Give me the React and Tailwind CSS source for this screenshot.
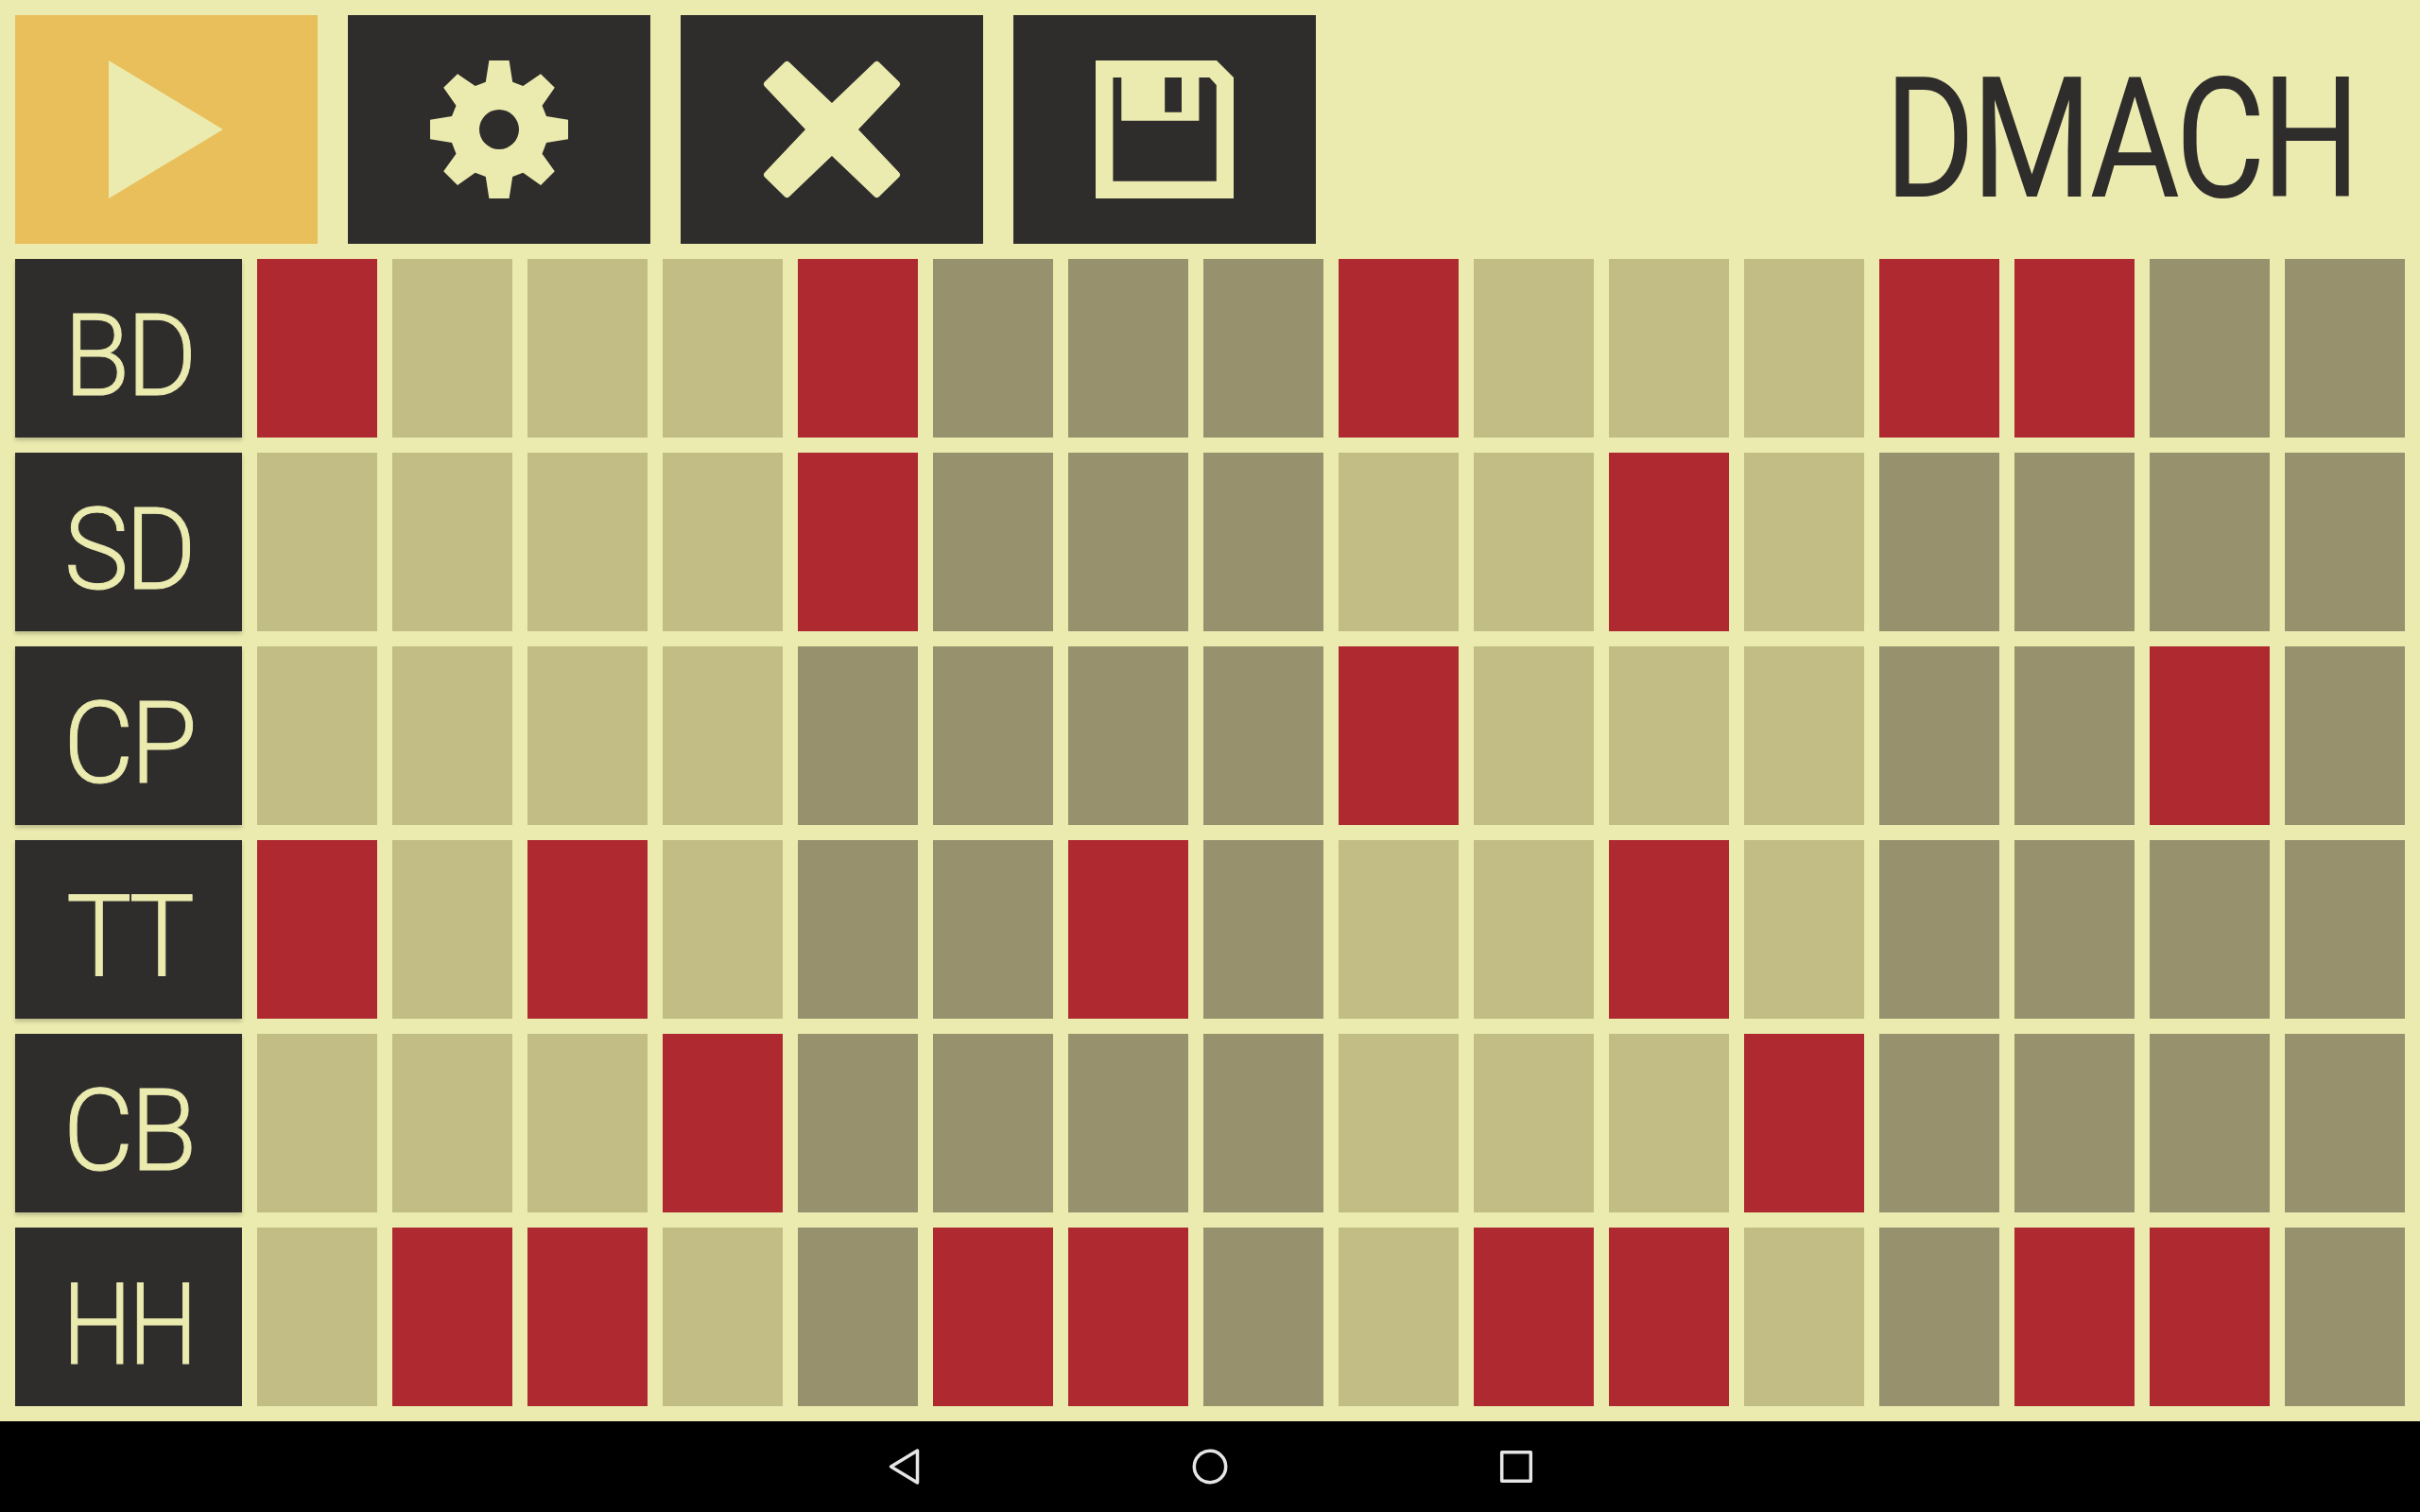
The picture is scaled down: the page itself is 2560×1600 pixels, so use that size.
import React from "react";

const tracks = [
  { name: "BD", on: [0, 4, 8, 12, 13], squeeze: "scale-x-[0.95]" },
  { name: "SD", on: [4, 10], squeeze: "scale-x-[0.96]" },
  { name: "CP", on: [8, 14], squeeze: "scale-x-[0.96]" },
  { name: "TT", on: [0, 2, 6, 10], squeeze: "scale-x-[0.97]" },
  { name: "CB", on: [3, 11], squeeze: "scale-x-[0.96]" },
  { name: "HH", on: [1, 2, 5, 6, 9, 10, 13, 14], squeeze: "scale-x-[0.86]" },
];
const steps = Array.from({ length: 16 }, (_, i) => i);

function PlayIcon() {
  return (
    <svg viewBox="0 0 146 146" className="w-[146px] h-[146px] fill-[#ebebaf]">
      <polygon points="12,0 133,73 12,146" />
    </svg>
  );
}

function GearIcon() {
  return (
    <svg viewBox="0 0 146 146" className="w-[146px] h-[146px] fill-[#ebebaf]">
      <path
        fillRule="evenodd"
        d="M62.4 0H83.6L87.2 22.7 98.3 27 117 14.3 131.8 28.7 118.5 47.7 123 59 146 62.7V83.3L123 87 118.5 98.7 131.8 117.3 117 132 98.3 118.7 87.2 123 83.6 146H62.4L58.8 123 47.7 118.7 29 132 14.2 117.3 27.5 98.7 23 87 0 83.3V62.7L23 59 27.5 47.7 14.2 28.7 29 14.3 47.7 27 58.8 22.7ZM73 52A21 21 0 1 0 73 94 21 21 0 1 0 73 52Z"
      />
    </svg>
  );
}

function CloseIcon() {
  return (
    <svg viewBox="0 0 146 146" className="w-[146px] h-[146px] fill-[#ebebaf]">
      <path d="M73 45L118.5 1.5Q120.5 0 122.5 1.5L144.5 23Q146 25 144.5 27L101 73 144.5 119Q146 121 144.5 123L122.5 144.5Q120.5 146 118.5 144.5L73 101 27.5 144.5Q25.5 146 23.5 144.5L1.5 123Q0 121 1.5 119L45 73 1.5 27Q0 25 1.5 23L23.5 1.5Q25.5 0 27.5 1.5Z" />
    </svg>
  );
}

function SaveIcon() {
  return (
    <svg viewBox="0 0 146 146" className="w-[146px] h-[146px] fill-[#ebebaf]">
      <path
        fillRule="evenodd"
        d="M0 0H128L146 18V146H0ZM18.4 18V127.7H127.8V26L120.4 18H109.4V63.7H27.3V18ZM73.2 18V54.7H91V18Z"
      />
    </svg>
  );
}

function ToolButton({ active, children }) {
  return (
    <button className={`w-80 flex items-center justify-center ${active ? "bg-[#e9bf5b]" : "bg-[#2f2d2c]"}`}>
      {children}
    </button>
  );
}

export default function App() {
  return (
    <div className="h-screen flex flex-col bg-black font-['Roboto',sans-serif]">
      <div className="flex-1 bg-[#ebebaf] p-4 flex flex-col gap-4">
        {/* Toolbar */}
        <div className="h-[242px] flex gap-8">
          <ToolButton active><PlayIcon /></ToolButton>
          <ToolButton><GearIcon /></ToolButton>
          <ToolButton><CloseIcon /></ToolButton>
          <ToolButton><SaveIcon /></ToolButton>
          <div className="flex-1 flex items-center justify-end pr-[51px] pt-[20px]">
            <h1 className="inline-block origin-right scale-x-[0.823] text-[178px] leading-none font-normal text-[#2f2d2c] tracking-[-5px]">
              DMACH
            </h1>
          </div>
        </div>

        {/* Step grid */}
        <div className="grid grid-cols-[240px_repeat(16,127px)] auto-rows-[189px] gap-4">
          {tracks.map((track, row) => (
            <React.Fragment key={track.name}>
              <div
                className={`flex items-center justify-center pt-[16px] bg-[#2f2d2c] text-[#ebebaf] text-[120px] leading-none font-light tracking-[-4px] [-webkit-text-stroke:1px_#ebebaf] ${
                  row < 5 ? "shadow-[0_3px_4px_rgba(0,0,0,0.2)]" : ""
                }`}
              >
                <span className={`inline-block ${track.squeeze}`}>{track.name}</span>
              </div>
              {steps.map((step) => {
                const darker = Math.floor(step / 4) % 2 === 1;
                const color = track.on.includes(step) ? "bg-[#af2a30]" : darker ? "bg-[#97926d]" : "bg-[#c1bd85]";
                return <div key={step} className={color} />;
              })}
            </React.Fragment>
          ))}
        </div>
      </div>

      {/* Android nav bar */}
      <div className="h-24 flex items-center justify-center gap-[284px] bg-black">
        <svg viewBox="0 0 40 40" className="w-10 h-10 fill-none stroke-[#e5e5e5] stroke-[3.5]" strokeLinejoin="round">
          <path d="M34.5 3V37L6.5 20Z" />
        </svg>
        <svg viewBox="0 0 40 40" className="w-10 h-10 fill-none stroke-[#e5e5e5] stroke-[3.5]">
          <circle cx="20" cy="20" r="16.7" />
        </svg>
        <svg viewBox="0 0 40 40" className="w-10 h-10 fill-none stroke-[#e5e5e5] stroke-[3.5]" strokeLinejoin="round">
          <rect x="4.7" y="4.7" width="30.6" height="30.6" />
        </svg>
      </div>
    </div>
  );
}
